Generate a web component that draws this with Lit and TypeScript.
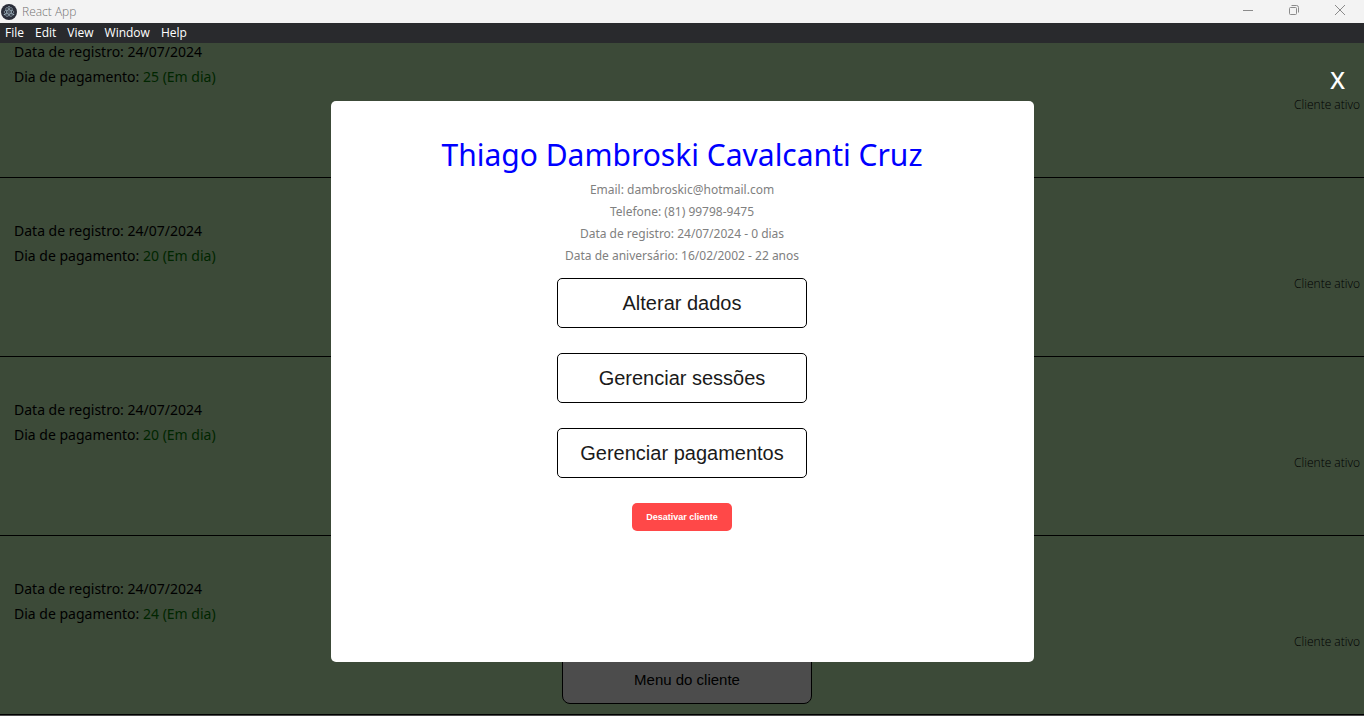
import { LitElement, html, css } from "lit";
import { customElement, property, state } from "lit/decorators.js";

interface Cliente {
  registro: string;
  dia: number;
  menu: boolean;
}

@customElement("window-bar")
class WindowBar extends LitElement {
  static styles = css`
    :host { display: block; font-family: "Open Sans", sans-serif; font-size: 12px; line-height: 20px; }
    .title { display: flex; align-items: center; height: 23px; background: #f3f3f3; color: #747474; }
    .logo { width: 16px; height: 16px; margin: 0 5px 0 1px; flex: none; }
    .name { flex: 1; font-weight: 300; }
    .controls { display: flex; align-self: flex-start; margin-right: 1px; }
    .ctl { width: 46px; height: 20px; padding: 0; border: 0; background: none; display: grid; place-items: center; }
    .ctl svg { width: 12px; height: 12px; fill: none; stroke: #8b8b8b; }
    .menu { display: flex; height: 20px; background: #292a2d; padding-left: 5px; gap: 11px; }
    .menu button { border: 0; padding: 0; background: none; color: #fff; font: inherit; }
  `;
  render() {
    return html`
      <header class="title">
        <svg class="logo" viewBox="0 0 32 32" aria-hidden="true">
          <circle cx="16" cy="16" r="16" fill="#2b2e3a" />
          <g fill="none" stroke="#9fb4bf" stroke-width="1.3">
            <ellipse cx="16" cy="16" rx="10" ry="4" />
            <ellipse cx="16" cy="16" rx="10" ry="4" transform="rotate(60 16 16)" />
            <ellipse cx="16" cy="16" rx="10" ry="4" transform="rotate(120 16 16)" />
          </g>
          <g fill="#9fb4bf">
            <circle cx="16" cy="16" r="1.4" />
            <circle cx="16" cy="5.5" r="1.6" />
            <circle cx="7" cy="21" r="1.6" />
            <circle cx="25" cy="21" r="1.6" />
          </g>
        </svg>
        <span class="name">React App</span>
        <div class="controls">
          <button class="ctl" aria-label="Minimizar"><svg viewBox="0 0 12 12"><path d="M1 6.5h10" /></svg></button>
          <button class="ctl" aria-label="Restaurar">
            <svg viewBox="0 0 12 12"><rect x="1.5" y="3.5" width="7" height="7" rx="1" /><path d="M3.5 1.5h5a2 2 0 0 1 2 2v5" /></svg>
          </button>
          <button class="ctl" aria-label="Fechar janela"><svg viewBox="0 0 12 12"><path d="M1 1l10 10M11 1L1 11" /></svg></button>
        </div>
      </header>
      <nav class="menu">
        ${["File", "Edit", "View", "Window", "Help"].map((m) => html`<button>${m}</button>`)}
      </nav>
    `;
  }
}

@customElement("client-row")
class ClientRow extends LitElement {
  @property({ attribute: false }) cliente!: Cliente;
  static styles = css`
    :host {
      display: grid; grid-template-columns: 1fr 250px 1fr; flex: none; box-sizing: border-box; height: 179px;
      padding: 40px 4px 10px 14px; background: #c8f7bb; border-bottom: 1px solid #000;
      font-family: "Open Sans", sans-serif; color: #000;
    }
    p { margin: 0; }
    .info { font-family: "Noto Sans", sans-serif; font-size: 14px; line-height: 25px; }
    .day { color: green; }
    .open {
      grid-column: 2; align-self: end; height: 50px; border: 1px solid #000; border-radius: 8px; background: #fff; color: #000;
      font: 15px "Liberation Sans", sans-serif;
    }
    .status {
      grid-column: 3; align-self: center; text-align: right; font-size: 12px; font-weight: 300; line-height: 20px;
      padding-top: 4px;
    }
  `;
  render() {
    return html`
      <div class="info">
        <p>Data de registro: ${this.cliente.registro}</p>
        <p>Dia de pagamento: <span class="day">${this.cliente.dia} (Em dia)</span></p>
      </div>
      ${this.cliente.menu ? html`<button class="open">Menu do cliente</button>` : null}
      <p class="status">Cliente ativo</p>
    `;
  }
}

@customElement("client-dialog")
class ClientDialog extends LitElement {
  static styles = css`
    :host {
      position: absolute; inset: 0; display: flex; align-items: center; justify-content: center;
      background: rgba(0, 0, 0, 0.7); font-family: "Noto Sans", sans-serif;
    }
    .close {
      position: absolute; top: 19px; right: 19px; padding: 0; border: 0; background: none; color: #fff;
      font: 500 24px/36px "Noto Sans", sans-serif;
    }
    .box {
      box-sizing: border-box; width: 703px; max-width: 90%; min-height: 561px; margin-top: 4px; padding: 30px 20px;
      background: #fff; border-radius: 5px; display: flex; flex-direction: column; align-items: center;
    }
    h1 { margin: 0; font-size: 30px; line-height: 48px; font-weight: 400; color: #00f; text-align: center; }
    p { margin: 0; font-size: 12px; line-height: 22px; color: #808080; }
    .actions { display: flex; flex-direction: column; align-items: center; gap: 25px; margin-top: 11px; }
    .action {
      width: 250px; height: 50px; border: 1px solid #000; border-radius: 5px; background: #fff; color: #1a1a1a;
      font: 20px "Liberation Sans", sans-serif;
    }
    .off {
      width: 100px; height: 28px; padding: 0; border: 0; border-radius: 5px; background: #ff4848; color: #fff;
      font: bold 9px "Liberation Sans", sans-serif;
    }
  `;
  render() {
    return html`
      <button class="close" @click=${() => this.dispatchEvent(new CustomEvent("close"))}>X</button>
      <section class="box" role="dialog" aria-labelledby="nome">
        <h1 id="nome">Thiago Dambroski Cavalcanti Cruz</h1>
        <p>Email: dambroskic@hotmail.com</p>
        <p>Telefone: (81) 99798-9475</p>
        <p>Data de registro: 24/07/2024 - 0 dias</p>
        <p>Data de aniversário: 16/02/2002 - 22 anos</p>
        <div class="actions">
          <button class="action">Alterar dados</button>
          <button class="action">Gerenciar sessões</button>
          <button class="action">Gerenciar pagamentos</button>
          <button class="off">Desativar cliente</button>
        </div>
      </section>
    `;
  }
}

@customElement("app-root")
class AppRoot extends LitElement {
  @state() private open = true;
  private clientes: Cliente[] = [25, 20, 20, 24].map((dia, i) => ({ registro: "24/07/2024", dia, menu: i === 3 }));
  static styles = css`
    :host { display: flex; flex-direction: column; height: 100vh; overflow: hidden; }
    main { position: relative; flex: 1; min-height: 0; overflow: hidden; display: flex; flex-direction: column; background: #fff; }
    .list { flex: 1; min-height: 0; display: flex; flex-direction: column; justify-content: flex-end; padding-bottom: 1px; }
  `;
  render() {
    return html`
      <window-bar></window-bar>
      <main>
        <div class="list">${this.clientes.map((c) => html`<client-row .cliente=${c}></client-row>`)}</div>
        ${this.open ? html`<client-dialog @close=${() => (this.open = false)}></client-dialog>` : null}
      </main>
    `;
  }
}
